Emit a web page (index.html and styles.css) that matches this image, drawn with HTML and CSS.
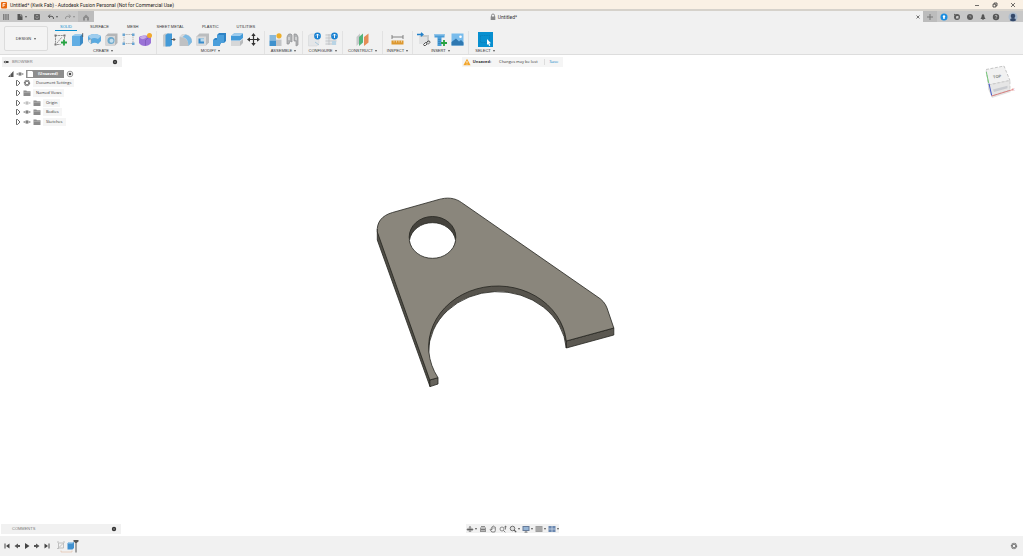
FILE: index.html
```html
<!DOCTYPE html>
<html lang="en">
<head>
    <meta charset="UTF-8">
    <meta name="viewport" content="width=device-width, initial-scale=1.0">
    <title>Untitled* (Kwik Fab) - Autodesk Fusion Personal</title>
    <link rel="stylesheet" href="styles.css">
</head>
<body>
    <!-- shared icons -->
    <svg class="defs" aria-hidden="true">
        <symbol id="folder" viewBox="0 0 8 8"><path d="M.5 1.500h2.800l.7.8h3.500v4.700H.5z" fill="#8b8b8b"/><path d="M.5 3.300h7" stroke="#ccc" stroke-width=".5"/></symbol>
        <symbol id="eye" viewBox="0 0 8 8"><path d="M.6 4Q4 1 7.400 4Q4 7 .6 4z" fill="#eee" stroke="#909090" stroke-width=".8"/><circle cx="4" cy="4" r="1.200" fill="#7c7c7c"/></symbol>
        <symbol id="expand" viewBox="0 0 6 8"><path d="M1.500 1.500h1L5 4 2.500 6.500h-1z" fill="#fff" stroke="#444" stroke-width=".8"/></symbol>
        <symbol id="gear" viewBox="0 0 8 8"><circle cx="4" cy="4" r="2.600" fill="none" stroke="#777" stroke-width="1.200" stroke-dasharray="1.200 .4"/><circle cx="4" cy="4" r="1.800" fill="none" stroke="#777" stroke-width="1"/></symbol>
        <symbol id="dot" viewBox="0 0 6 6"><circle cx="3" cy="3" r="2.200" fill="#333"/><path d="M2 3h2M3 2v2" stroke="#999" stroke-width=".5"/></symbol>
    </svg>

    <header class="titlebar">
        <svg class="logo" viewBox="0 0 8 8"><rect x="1" y="1" width="6" height="6.500" rx="1" fill="#e8690f"/><path d="M3 6V2.500h2.500M3 4.200h2" stroke="#fff" fill="none" stroke-width=".8"/></svg>
        <span class="titlebar-text">Untitled* (Kwik Fab) - Autodesk Fusion Personal (Not for Commercial Use)</span>
        <div class="window-buttons">
            <button aria-label="Minimize"><svg viewBox="0 0 6 6"><path d="M1 3.500h4" stroke="#333" stroke-width=".7"/></svg></button>
            <button aria-label="Restore"><svg viewBox="0 0 6 6"><path d="M1 2.200h2.800V5H1zM2.200 2V1H5v2.800H4" fill="none" stroke="#333" stroke-width=".8"/></svg></button>
            <button aria-label="Close window"><svg viewBox="0 0 6 6"><path d="M1 1l4 4M5 1L1 5" stroke="#333" stroke-width=".7"/></svg></button>
        </div>
    </header>

    <div class="tabrow">
        <div class="quick">
            <button aria-label="Data panel"><svg viewBox="0 0 8 8"><path d="M1 2h6M1 4h6M1 6h6" stroke="#666" stroke-width="1.400" stroke-dasharray="1.500 .7"/></svg></button>
            <button class="caret" aria-label="File"><svg viewBox="0 0 8 8"><path d="M1.500 1h3.500l1.500 1.700V7h-5z" fill="#555"/><path d="M4.600 1v2h2" stroke="#ccc" stroke-width=".5" fill="none"/></svg></button>
            <button aria-label="Save"><svg viewBox="0 0 8 8"><path d="M1.500 1.500h5v5h-5z" fill="#999" stroke="#666"/><path d="M2.500 2v1.500h3V2M2.500 6V4.800h3V6" fill="none" stroke="#555" stroke-width=".7"/></svg></button>
            <button class="caret" aria-label="Undo"><svg viewBox="0 0 8 8"><path d="M3 1.500 1.500 3.300 3 5M1.500 3.300H5Q6.700 3.500 6.500 6" fill="none" stroke="#555" stroke-width="1"/></svg></button>
            <button class="caret faded" aria-label="Redo"><svg viewBox="0 0 8 8"><path d="M5 1.500 6.500 3.300 5 5M6.500 3.300H3Q1.300 3.500 1.500 6" fill="none" stroke="#666" stroke-width="1"/></svg></button>
            <button class="home" aria-label="Home"><svg viewBox="0 0 8 8"><path d="M1 4.500 4 1.500l3 3v3H5V5H3v2.500H1z" fill="#8c8c8c"/></svg></button>
        </div>
        <div class="doc-tab">
            <span class="doc-name"><svg viewBox="0 0 6 8"><path d="M1.500 4V2.500a1.500 1.500 0 0 1 3 0V4" fill="none" stroke="#777" stroke-width=".8"/><rect x=".7" y="3.500" width="4.600" height="3.500" fill="#888"/></svg>Untitled*</span>
            <button aria-label="Close tab"><svg viewBox="0 0 6 6"><path d="M1.500 1.500l3 3M4.500 1.500l-3 3" stroke="#555" stroke-width=".8"/></svg></button>
        </div>
        <div class="account">
            <button class="new-tab" aria-label="New tab"><svg viewBox="0 0 8 8"><path d="M4 1v6M1 4h6" stroke="#777" stroke-width="1"/></svg></button>
            <button aria-label="Updates"><svg viewBox="0 0 8 8"><circle cx="4" cy="4" r="3.500" fill="#1d8ee0"/><path d="M2.900 3.300a1.100 1.100 0 0 1 2.200 0L4.600 6H3.400z" fill="#fff"/></svg></button>
            <button aria-label="Extensions"><svg viewBox="0 0 8 8"><circle cx="4" cy="4" r="3" fill="#5a5a5a"/><path d="M3 3h2.500v2.500H3z" fill="#ccc"/><path d="M1 1l2.500 2" stroke="#5a5a5a"/></svg></button>
            <button aria-label="Job status"><svg viewBox="0 0 8 8"><circle cx="4" cy="4" r="3" fill="#5a5a5a"/><path d="M4 2.200V4h1.500" stroke="#bbb" stroke-width=".6" fill="none"/></svg></button>
            <button aria-label="Notifications"><svg viewBox="0 0 8 8"><path d="M4 1Q2.500 1.500 2.500 4L1.500 6h5l-1-2Q5.500 1.500 4 1zM3.300 6.300h1.400V7H3.300z" fill="#555"/></svg></button>
            <button aria-label="Help"><svg viewBox="0 0 8 8"><circle cx="4" cy="4" r="3.200" fill="#555"/><path d="M3 3.200Q3.200 2.200 4 2.200T5 3.200Q5 3.700 4 4.200v.4M4 5.200v.8" stroke="#ddd" stroke-width=".7" fill="none"/></svg></button>
            <button class="avatar" aria-label="Profile"><svg viewBox="0 0 10 10"><circle cx="5" cy="5" r="4.500" fill="#a9bace"/><circle cx="5" cy="4" r="2.300" fill="#344869"/><path d="M1.800 8.200Q2.500 6 5 6t3.200 2.200Q5 10.500 1.800 8.200z" fill="#344869"/></svg></button>
        </div>
    </div>

    <section class="ribbon">
        <button class="workspace caret">DESIGN</button>
        <div class="ribbon-main">
            <nav class="ribbon-tabs">
                <a class="active" href="#">SOLID</a>
                <a href="#">SURFACE</a>
                <a href="#">MESH</a>
                <a href="#">SHEET METAL</a>
                <a href="#">PLASTIC</a>
                <a href="#">UTILITIES</a>
            </nav>
            <div class="groups">
                <div class="group">
                    <div class="tools">
                        <button aria-label="Create sketch"><svg viewBox="0 0 15 15"><path d="M2.500 3.500h9v4M2.500 3.500v9h5M4 11l5-6" fill="none" stroke="#777" stroke-width=".8" stroke-dasharray="2 .6"/><path d="M1.500 2.500h2v2h-2zM10.500 2.500h2v2h-2zM1.500 11.500h2v2h-2z" fill="#777"/><path d="M11 7.500v6M8 10.500h6" stroke="#27a343" stroke-width="1.800"/></svg></button>
                        <button aria-label="Extrude"><svg viewBox="0 0 15 15"><path d="M2 4 5 2h8l-3 2z" fill="#9ccbed"/><path d="M2 4h8v10H2z" fill="#62aee4"/><path d="M10 4l3-2v9l-3 3z" fill="#3a8ac6"/><path d="M12.700 1v4" stroke="#555" stroke-width=".8"/></svg></button>
                        <button aria-label="Revolve"><svg viewBox="0 0 15 15"><path d="M1 4Q7.500 0 14 4v5l-3 3Q8 9.500 4 12L1 9z" fill="#5baae0"/><path d="M1 4Q7.500 0 14 4l-3 3Q7 5 4 7z" fill="#9fcdee"/><path d="M1 8.500 4 7v5" fill="#e7eef3" stroke="#999" stroke-width=".5"/></svg></button>
                        <button aria-label="Hole"><svg viewBox="0 0 15 15"><path d="M1.500 4 4 1.500h9.500v9.500L11 13.500H1.500z" fill="#b4b6b8"/><path d="M1.500 4H11v9.500H1.500z" fill="#d6d7d8"/><circle cx="7" cy="8.500" r="3.500" fill="#6da9cd"/><circle cx="7.500" cy="8.800" r="2" fill="#c3deed"/></svg></button>
                        <button aria-label="Pattern"><svg viewBox="0 0 15 15"><path d="M3 2.500h9v9M3 2.500v9h9" fill="none" stroke="#999" stroke-width=".7" stroke-dasharray="1.500 .7"/><path d="M1.500 1.500h2.500v2.500H1.500zM11 1.500h2.500v2.500H11zM1.500 10.500h2.500V13H1.500zM11 10.500h2.500V13H11z" fill="#6aa5d2"/></svg></button>
                        <button aria-label="Create form"><svg viewBox="0 0 15 15"><path d="M1 5Q3 3 7.500 3.500T13 5v6q-2 3-6 3t-6-3z" fill="#9a72d6"/><path d="M1.500 5.500Q5 2.500 9 5 5 9 1.500 5.500z" fill="#c6aae9"/><path d="M7.500 8v5.500M7.500 8l4-3" stroke="#7650b4" stroke-width=".6"/><circle cx="11.500" cy="3.500" r="2.500" fill="#f1a92c"/></svg></button>
                    </div>
                    <button class="group-label caret">CREATE</button>
                </div>
                <div class="group">
                    <div class="tools">
                        <button aria-label="Press pull"><svg viewBox="0 0 15 15"><path d="M2 3 4 1.500h4V13l-2 1.500H2z" fill="#c8cacb"/><path d="M4.500 3l2-1.500H11V13l-2 1.500H4.500z" fill="#439ad8"/><path d="M10 7.500h4M12.500 6l1.500 1.500L12.500 9" stroke="#555" fill="none"/></svg></button>
                        <button aria-label="Fillet"><svg viewBox="0 0 15 15"><path d="M1.500 14V5L4.500 2q9 0 9.500 8l-3.500 4z" fill="#bfc1c3"/><path d="M1.500 5 4.500 2Q14 2 14 10l-3.500 4Q10.500 5 1.500 5z" fill="#d9dadb"/><path d="M4.500 5 7.500 2.500Q14 4 14 10l-3.500 4Q10.500 6 4.500 5z" fill="#7dbae4"/></svg></button>
                        <button aria-label="Shell"><svg viewBox="0 0 15 15"><path d="M1.500 4.500 4.500 1.500H14v9l-3 3H1.500z" fill="#bbbdbf"/><path d="M1.500 4.500H11v9H1.500z" fill="#dadbdc"/><path d="M3.500 6.500h5.500v5H3.500z" fill="#3a8dcc"/><path d="M5.500 6.500H9v3H5.500z" fill="#b7d8ed"/></svg></button>
                        <button aria-label="Combine"><svg viewBox="0 0 15 15"><path d="M5 3l2-2h7v8l-2 2H9l-1.500 3H1V8l2-2h2z" fill="#2e83c5"/><path d="M5 3h7v8H8v3H1V8h4z" fill="#4b9fdb"/></svg></button>
                        <button aria-label="Split body"><svg viewBox="0 0 15 15"><path d="M2 4l3-2.500h9V6l-3 2.500H2z" fill="#429ad9"/><path d="M2 4l3-2.500h9L11 4z" fill="#9ccbed"/><path d="M2 9.500h9L14 7v4l-3 3H2z" fill="#b9bbbd"/><path d="M2 9.500h9V14H2z" fill="#d6d7d8"/></svg></button>
                        <button aria-label="Move"><svg viewBox="0 0 15 15"><path d="M7.500 2.500v10M2.500 7.500h10" stroke="#333" stroke-width="1.200"/><path d="M7.500 1 9.700 4H5.300zM7.500 14l2.200-3H5.300zM1 7.500 4 5.300v4.400zM14 7.500l-3-2.200v4.400z" fill="#333"/></svg></button>
                    </div>
                    <button class="group-label caret">MODIFY</button>
                </div>
                <div class="group">
                    <div class="tools">
                        <button aria-label="New component"><svg viewBox="0 0 15 15"><path d="M1.500 3h6.500v5.500H1.500z" fill="#88b9dc"/><path d="M1.500 8.500H8V14H1.500z" fill="#3f91cd"/><path d="M8 7.500h5.500V14H8z" fill="#c3c5c7"/><path d="M8 7.500l1-1h5l-.5 1z" fill="#e6e6e6"/><circle cx="11" cy="3.800" r="2.600" fill="#edaf2c"/></svg></button>
                        <button aria-label="Joint"><svg viewBox="0 0 15 15"><path d="M2 12V5q1-4 4-3l1 1v7l-2-1-1 3zM9 9V2q3-1 4 3v8l-2 1V9z" fill="#b2b4b6" stroke="#8f9193" stroke-width=".7"/><path d="M4 5v3M11 5v3" stroke="#eee"/></svg></button>
                    </div>
                    <button class="group-label caret">ASSEMBLE</button>
                </div>
                <div class="group">
                    <div class="tools">
                        <button aria-label="Configure"><svg viewBox="0 0 15 15"><path d="M1.500 3.500 4 2h8v9l-2 3H1.500z" fill="#e4e6e8" stroke="#d1d3d5" stroke-width=".5"/><path d="M8 10l4 3" stroke="#a9c8db"/><circle cx="10.500" cy="4" r="3.400" fill="#1a82d2"/><path d="M10.500 2v4M9 3.500 10.500 2 12 3.500" stroke="#fff" stroke-width=".9" fill="none"/></svg></button>
                        <button aria-label="Configuration table"><svg viewBox="0 0 15 15"><path d="M1.500 2h11v11h-11z" fill="#e5e7e9"/><path d="M1.500 3h6M1.500 6h11M1.500 9h11M1.500 12h7M5 2v11" stroke="#b9bcbe" stroke-width=".7"/><path d="M8 9h4v4H8z" fill="#b9d4e5"/><circle cx="10.500" cy="4" r="3.400" fill="#1a82d2"/><path d="M10.500 2v4M9 3.500 10.500 2 12 3.500" stroke="#fff" stroke-width=".9" fill="none"/></svg></button>
                    </div>
                    <button class="group-label caret">CONFIGURE</button>
                </div>
                <div class="group">
                    <div class="tools">
                        <button aria-label="Offset plane"><svg viewBox="0 0 15 15"><path d="M1.500 5 5 1.500v9L1.500 14z" fill="#c6c8c9"/><path d="M4 5l4-3.500v9L4 14z" fill="#52b37b"/><path d="M9 5l4.500-3.500v9L9 14z" fill="#e58d57"/></svg></button>
                    </div>
                    <button class="group-label caret">CONSTRUCT</button>
                </div>
                <div class="group">
                    <div class="tools">
                        <button aria-label="Measure"><svg viewBox="0 0 15 15"><path d="M2 3v4M13 3v4M2 5h11" stroke="#777" stroke-width=".9"/><path d="M1.500 8.500h12v4h-12z" fill="#dd982f"/><path d="M4 8.500v2M6.500 8.500v2M9 8.500v2M11.500 8.500v2" stroke="#fff" stroke-width=".5"/></svg></button>
                    </div>
                    <button class="group-label caret">INSPECT</button>
                </div>
                <div class="group">
                    <div class="tools">
                        <button aria-label="Insert derive"><svg viewBox="0 0 15 15"><path d="M3 5l2-2h8v7l-2 2H3z" fill="#c9cbcc"/><path d="M3 5h8v7H3z" fill="#e1e2e3"/><path d="M1 2.500h6M5 .8l2 1.700-2 1.800" stroke="#2381c9" stroke-width="1.300" fill="none"/><path d="M7.500 12.500l2-2q2-.5 1.500 1.500l-1.500 1.500q-2 .5-2-1zM10.500 10.500l1.500-1.500q2-.5 2 1.300L12 12.500" fill="none" stroke="#444" stroke-width=".9"/></svg></button>
                        <button aria-label="Insert fastener"><svg viewBox="0 0 15 15"><path d="M1.500 2h10v3.500h-3V14h-4V5.500h-3z" fill="#4b9dd8"/><path d="M1.500 2h10v1.500h-10z" fill="#8fc3e8"/><path d="M5 7.500h3M5 9.500h3M5 11.500h3" stroke="#2e76ad" stroke-width=".5"/><path d="M11 8v6M8 11h6" stroke="#27a343" stroke-width="1.800"/></svg></button>
                        <button aria-label="Insert canvas"><svg viewBox="0 0 15 15"><path d="M1.500 1.500h12v12h-12z" fill="#79bcec"/><path d="M1.500 13.500V10L6 6.500l3 3L11 8l2.500 2.500v3z" fill="#2f78b1"/><circle cx="10.500" cy="4.700" r="1.300" fill="#fff"/></svg></button>
                    </div>
                    <button class="group-label caret">INSERT</button>
                </div>
                <div class="group">
                    <div class="tools">
                        <button aria-label="Select"><svg viewBox="0 0 15 15"><rect width="15" height="15" fill="#078fd0"/><path d="M2.500 3.500h9v7h-9z" fill="none" stroke="#0870a9" stroke-width=".5" stroke-dasharray="1 .7"/><path d="M9 7l4 4.300h-1.700l1 2.200-1.200.5-.9-2.200L9 13z" fill="#fff"/></svg></button>
                    </div>
                    <button class="group-label caret">SELECT</button>
                </div>
            </div>
        </div>
    </section>

    <main class="viewport">
        <!-- bracket body on the modelling canvas -->
        <svg class="model" viewBox="0 55 1023 481">
            <g stroke="#25241f" stroke-width=".8" stroke-linejoin="round">
                <path d="M377.300 229V240L430 386.600V380z" fill="#504e47"/>
                <path d="M429.800 380 438 377.700V384L430 386.600z" fill="#66635b"/>
                <path d="M566.300 341 613.800 328V335L566.300 348z" fill="#5b5851"/>
                <path d="M566.300 341A69 61 0 0 0 428.500 346V353A69 61 0 0 1 566.300 348z" fill="#57544d"/>
                <path d="M377.300 232C376.500 222 382 215.500 392.500 212.500L438 199.700C447 197 455 197.700 461.500 202.500L597 296.500Q604.500 301 607 308L613.800 328 566.300 341A69 61 0 1 0 438 377.700L429.800 380z" fill="#8a867c"/>
                <ellipse cx="432.500" cy="237" rx="23.300" ry="20.500" fill="#45433d"/>
                <path d="M409.400 240.500A23.300 20.500 0 0 1 455.600 240.500A23.300 20.500 0 0 1 409.400 240.500z" fill="#fff"/>
            </g>
        </svg>

        <div class="panels">
            <section class="browser">
                <div class="panel-head">
                    <svg class="collapse" viewBox="0 0 6 6"><path d="M.5 3l2-1.500v3zM3 2h2.500v2H3z" fill="#444"/></svg>
                    <span>BROWSER</span>
                    <button aria-label="Browser options"><svg viewBox="0 0 6 6"><use href="#dot"/></svg></button>
                </div>
                <ul class="tree">
                    <li class="root">
                        <svg class="arrow" viewBox="0 0 6 8"><path d="M5.500 1v6H0z" fill="#555"/><path d="M2.500 2v6" stroke="#ddd" stroke-width=".4"/></svg>
                        <svg><use href="#eye"/></svg>
                        <span class="root-name"><svg viewBox="0 0 8 8"><path d="M1.500 1h4.500l1 1v5H1.500z" fill="#fff"/></svg><b>(Unsaved)</b></span>
                        <svg viewBox="0 0 8 8"><circle cx="4" cy="4" r="2.800" fill="#fff" stroke="#555" stroke-width=".6"/><circle cx="4" cy="4" r="1.300" fill="#444"/></svg>
                    </li>
                    <li><svg class="arrow"><use href="#expand"/></svg><svg><use href="#gear"/></svg><span>Document Settings</span></li>
                    <li><svg class="arrow"><use href="#expand"/></svg><svg><use href="#folder"/></svg><span>Named Views</span></li>
                    <li><svg class="arrow"><use href="#expand"/></svg><svg class="hidden-eye"><use href="#eye"/></svg><svg><use href="#folder"/></svg><span>Origin</span></li>
                    <li><svg class="arrow"><use href="#expand"/></svg><svg><use href="#eye"/></svg><svg><use href="#folder"/></svg><span>Bodies</span></li>
                    <li><svg class="arrow"><use href="#expand"/></svg><svg><use href="#eye"/></svg><svg><use href="#folder"/></svg><span>Sketches</span></li>
                </ul>
            </section>
            <div class="notice">
                <svg viewBox="0 0 8 8"><path d="M4 .8 7.600 7.200H.4z" fill="#f2a52b"/><path d="M4 3v2M4 5.700v.8" stroke="#fff" stroke-width=".8"/></svg>
                <b>Unsaved:</b>
                <span>Changes may be lost</span>
                <a href="#">Save</a>
            </div>
            <svg class="cube" viewBox="980 60 43 42">
                <path d="M988 88 992 98 1011 92 1006 86z" fill="#e4e4e4"/>
                <path d="M986 69.500 988.700 85 991.700 96 988.500 90z" fill="#dcdcdc"/>
                <path d="M986 69.500 1004 66 1010 80.500 988.700 85z" fill="#f1f1f1" stroke="#a5a5a5" stroke-width=".6" stroke-dasharray="3 1.500"/>
                <path d="M988.700 85 1010 80.500V90L991.700 96z" fill="#e6e6e6" stroke="#bbb" stroke-width=".6" stroke-dasharray="3 1.500"/>
                <path d="M993 89.500 1007.500 85.800V88.300L994 92z" fill="#c9cbd0"/>
                <path d="M986.300 72 988.700 83" stroke="#75c878"/>
                <path d="M989 83.500 991.700 95.500" stroke="#4358c8"/>
                <path d="M991.700 96 1013 89.500" stroke="#d86b6b" stroke-width=".8"/>
                <text class="cube-top" x="993" y="78" transform="rotate(-9 997 76)">TOP</text>
                <text class="cube-axis" x="1012" y="91">X</text>
            </svg>
        </div>

        <div class="bottom">
            <section class="panel-head comments">
                <span>COMMENTS</span>
                <button aria-label="Comment options"><svg viewBox="0 0 6 6"><use href="#dot"/></svg></button>
            </section>
            <div class="navbar">
                <button class="caret" aria-label="Orbit"><svg viewBox="0 0 8 8"><path d="M4 1v6M1 4.500h6" stroke="#555"/><ellipse cx="4" cy="4.500" rx="3" ry="1.500" fill="none" stroke="#777" stroke-width=".7"/></svg></button>
                <button aria-label="Look at"><svg viewBox="0 0 8 8"><path d="M1 2.500h6V7H1z" fill="#888"/><path d="M2 1.500h4M2 4.500h4" stroke="#666" stroke-width=".8"/><path d="M2 3.500h4M2 5.500h4" stroke="#ddd" stroke-width=".5"/></svg></button>
                <button aria-label="Pan"><svg viewBox="0 0 8 8"><path d="M2.800 7 1 4.500l.8-.5 1 1V2l.8-.2.4-.8.8.2.7.6.8.3V5.500L5.700 7z" fill="#f5f5f5" stroke="#555" stroke-width=".8"/><path d="M3.800 2v2M5 2v2" stroke="#666" stroke-width=".4"/></svg></button>
                <button aria-label="Zoom"><svg viewBox="0 0 8 8"><circle cx="3" cy="4" r="2" fill="none" stroke="#666" stroke-width=".8"/><path d="M4.500 5.500 6.300 7.300M6.500 1v3.500M5.300 2.200 6.500 1l1 1.200" stroke="#555" stroke-width=".8" fill="none"/></svg></button>
                <button class="caret" aria-label="Fit"><svg viewBox="0 0 8 8"><circle cx="3.500" cy="3.500" r="2.300" fill="#ddd" stroke="#555" stroke-width=".9"/><path d="M5.200 5.200 7.200 7.200" stroke="#444" stroke-width="1.200"/></svg></button>
                <button class="caret" aria-label="Display settings"><svg viewBox="0 0 8 8"><path d="M.5 1h7v5h-7z" fill="#566f91"/><path d="M1.500 2h5v3h-5z" fill="#8eafd3"/><path d="M4 6v1M2.500 7.200h3" stroke="#555" stroke-width=".8"/></svg></button>
                <button class="caret" aria-label="Grid and snaps"><svg viewBox="0 0 8 8"><path d="M.5 1h7v6h-7z" fill="#969696"/><path d="M.5 3h7M.5 5h7" stroke="#bbb" stroke-width=".5"/></svg></button>
                <button class="caret" aria-label="Viewports"><svg viewBox="0 0 8 8"><path d="M.5 1h7v6h-7z" fill="#5c7ca8"/><path d="M4 1v6M.5 4h7" stroke="#c5d2e4" stroke-width=".8"/></svg></button>
            </div>
        </div>
    </main>

    <footer class="timeline">
        <div class="playback">
            <button aria-label="Go to start"><svg viewBox="0 0 8 8"><path d="M2 1.500v5" stroke="#444"/><path d="M6.500 1.500v5L3 4z" fill="#444"/></svg></button>
            <button aria-label="Step back"><svg viewBox="0 0 8 8"><path d="M5 1.500v5L1.500 4zM5 3h2v2H5z" fill="#555"/></svg></button>
            <button aria-label="Play"><svg viewBox="0 0 8 8"><path d="M2 1v6l4.500-3z" fill="#444"/></svg></button>
            <button aria-label="Step forward"><svg viewBox="0 0 8 8"><path d="M3 1.500v5L6.500 4zM1 3h2v2H1z" fill="#555"/></svg></button>
            <button aria-label="Go to end"><svg viewBox="0 0 8 8"><path d="M6 1.500v5" stroke="#444"/><path d="M1.500 1.500v5L5 4z" fill="#444"/></svg></button>
        </div>
        <svg class="features" viewBox="0 0 24 16">
            <path d="M2.500 5h5v5h-5zM1 4h2M1 10.500h2M7 4h2M3 9.500l4-4" fill="none" stroke="#b5b5b5" stroke-width=".8"/>
            <path d="M5 12.500v1.500h11v-1.500" fill="none" stroke="#e2bb9d" stroke-width=".6"/>
            <path d="M11.500 5.500 13 4h5v6l-1.500 1.500h-5z" fill="#4090cf"/>
            <path d="M11.500 5.500 13 4h5l-1.500 1.500z" fill="#9fcbea"/>
            <path d="M17.500 2h5v1.500L20.500 5h-1l-2-1.500z" fill="#555"/>
            <path d="M20 4v10.500" stroke="#555" stroke-width="1"/>
        </svg>
        <button class="timeline-settings" aria-label="Timeline settings"><svg><use href="#gear"/></svg></button>
    </footer>
</body>
</html>
```

FILE: styles.css
```css
* {
    box-sizing: border-box;
}

body {
    margin: 0;
    height: 100vh;
    display: flex;
    flex-direction: column;
    overflow: hidden;
    background-color: #fff;
    color: #333;
    font: 4px/6px "Open Sans", sans-serif;
}

button {
    display: flex;
    align-items: center;
    justify-content: center;
    padding: 0;
    border: none;
    background: none;
    color: inherit;
    font: inherit;
    cursor: pointer;
}

a {
    color: inherit;
    text-decoration: none;
}

svg {
    display: block;
    flex: none;
    width: 8px;
    height: 8px;
}

.defs {
    position: absolute;
    width: 0;
    height: 0;
}

/* small drop-down triangle */
.caret::after {
    content: "";
    margin-left: 2px;
    border: 1px solid transparent;
    border-top: 2px solid #555;
    border-bottom: none;
}

/* title bar */
.titlebar {
    flex: none;
    display: flex;
    align-items: center;
    height: 11px;
    padding-right: 1px;
    border-bottom: 2px solid #d6d2cb;
    background-color: #faf1e5;
    color: #222;
}

.titlebar-text {
    margin-left: 2px;
}

.titlebar-text,
.doc-name {
    font-family: Roboto, sans-serif;
    font-size: 5px;
}

.window-buttons {
    display: flex;
    margin-left: auto;
}

.window-buttons button {
    width: 18px;
}

.window-buttons svg,
.panel-head svg {
    width: 6px;
    height: 6px;
}

/* quick access, document tab, account */
.tabrow {
    flex: none;
    display: flex;
    height: 11px;
    background-color: #f1f1f1;
}

.quick {
    display: flex;
    gap: 6px;
    padding-left: 2px;
    background-color: #c8c8c8;
}

.quick .caret::after {
    margin-left: 1px;
}

.faded {
    opacity: 0.5;
}

.home {
    width: 16px;
    margin-left: -3px;
    background-color: #bcbcbc;
}

.doc-tab {
    flex: 1;
    display: flex;
    align-items: center;
}

.doc-name {
    flex: 1;
    display: flex;
    justify-content: center;
    align-items: center;
    gap: 2px;
}

.doc-name svg {
    width: 6px;
}

.doc-tab button {
    width: 10px;
}

.doc-tab button svg {
    width: 6px;
    height: 6px;
}

.account {
    display: flex;
    background-color: #c8c8c8;
}

.account button {
    width: 13px;
}

.account .new-tab {
    width: 14px;
    background-color: #bcbcbc;
}

.account .avatar {
    width: 21px;
}

.avatar svg {
    width: 10px;
    height: 10px;
}

/* ribbon */
.ribbon {
    flex: none;
    display: flex;
    height: 33px;
    border-bottom: 1px solid #ddd;
    background-color: #f1f1f1;
    font-family: "Liberation Sans", Arial, sans-serif;
}

.workspace {
    width: 44px;
    height: 25px;
    margin: 4px 2px 0 4px;
    border: 1px solid #dcdcdc;
    border-radius: 2px;
    background-color: #f4f4f4;
}

.workspace.caret::after {
    margin-left: 3px;
}

.ribbon-tabs {
    display: flex;
    gap: 8px;
    padding-left: 5px;
}

.ribbon-tabs a {
    height: 9px;
    padding: 2px 5px 0;
}

.ribbon-tabs .active {
    border-bottom: 1px solid #0a8fd0;
    color: #0a8fd0;
}

.groups {
    display: grid;
    grid-template-columns: 107px 108px 38px 40px 40px 30px 56px 32px;
}

.group {
    display: flex;
    flex-direction: column;
    align-items: center;
    border-right: 1px solid #e2e2e2;
}

.group:last-child {
    border-right: none;
}

.tools {
    display: flex;
    gap: 2px;
    padding-top: 1px;
}

.tools svg {
    width: 15px;
    height: 15px;
}

.group-label {
    height: 6px;
    margin-top: 1px;
}

/* modelling canvas */
.viewport {
    position: relative;
    flex: 1;
    display: flex;
    flex-direction: column;
    justify-content: space-between;
}

.model {
    position: absolute;
    inset: 0;
    width: 100%;
    height: 100%;
}

.panels,
.bottom {
    position: relative;
    display: grid;
    grid-template-columns: 1fr auto 1fr;
    align-items: start;
    padding: 2px 0 2px 2px;
}

.bottom {
    padding-left: 1px;
}

.panel-head {
    display: flex;
    align-items: center;
    width: 120px;
    height: 10px;
    padding: 0 4px 0 1px;
    background-color: #f1f1f1;
    color: #777;
    font-family: "Liberation Sans", Arial, sans-serif;
}

.panel-head span {
    margin-left: 3px;
}

.panel-head button {
    margin-left: auto;
}

.comments {
    padding-left: 8px;
}

.tree {
    display: grid;
    grid-auto-rows: 1fr;
    height: 58px;
    margin: 2px 0 0;
    padding: 0 0 0 13px;
    list-style: none;
}

.tree li {
    display: flex;
    align-items: center;
    gap: 2px;
}

.tree .arrow {
    width: 6px;
}

.tree li > span {
    padding: 1px 3px;
    background-color: #f5f5f5;
}

.tree .root {
    margin-left: -7px;
}

.tree .root .root-name {
    display: flex;
    align-items: center;
    height: 8px;
    padding: 0 6px 0 0;
    background-color: #8d8d8d;
    color: #fff;
}

.root-name b {
    margin-left: 4px;
}

.hidden-eye {
    opacity: 0.5;
}

.notice {
    display: flex;
    align-items: center;
    height: 10px;
    padding: 0 5px 0 1px;
    background-color: #f5f5f5;
}

.notice b {
    margin: 0 8px 0 2px;
}

.notice a {
    margin-left: 6px;
    padding-left: 5px;
    border-left: 1px solid #ddd;
    color: #0a7fc4;
}

.cube {
    position: absolute;
    top: 5px;
    right: 0;
    width: 43px;
    height: 42px;
}

.cube-top {
    fill: #777;
    font: bold 4px "Liberation Sans", Arial, sans-serif;
}

.cube-axis {
    fill: #e08080;
    font: 4px "Liberation Sans", Arial, sans-serif;
}

.navbar {
    display: flex;
    gap: 2px;
    height: 9px;
    background-color: #f1f1f1;
}

.navbar svg {
    opacity: 0.9;
}

.navbar .caret::after {
    margin-left: 1px;
}

/* timeline */
.timeline {
    flex: none;
    display: flex;
    align-items: center;
    height: 20px;
    padding: 0 5px 0 3px;
    background-color: #f1f1f1;
}

.playback {
    display: flex;
    gap: 2px;
}

.features {
    width: 24px;
    height: 16px;
    margin-left: 5px;
}

.timeline-settings {
    margin-left: auto;
}
```
